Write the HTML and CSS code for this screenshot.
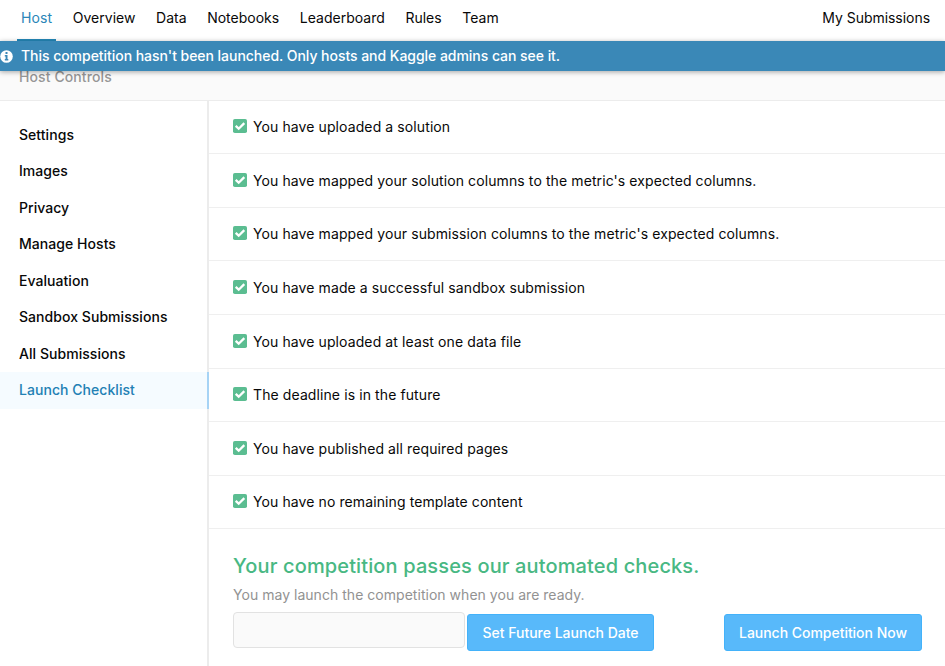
FILE: index.html
```html
<!DOCTYPE html>
<html lang="en">
<head>
<meta charset="utf-8">
<title>Launch Checklist</title>
<link rel="stylesheet" href="styles.css">
</head>
<body>
<svg class="sprite" aria-hidden="true">
  <symbol id="check" viewBox="0 0 14 14">
    <rect width="14" height="14" rx="1.8" fill="#5bbd91"/>
    <path d="M2.7 6.9 5.7 9.7 11.3 4.1" fill="none" stroke="#fff" stroke-width="2.3"/>
  </symbol>
</svg>
<nav class="tabs">
  <a class="tab active"><span>Host</span></a>
  <a class="tab"><span>Overview</span></a>
  <a class="tab"><span>Data</span></a>
  <a class="tab"><span>Notebooks</span></a>
  <a class="tab"><span>Leaderboard</span></a>
  <a class="tab"><span>Rules</span></a>
  <a class="tab"><span>Team</span></a>
  <a class="tab mine"><span>My Submissions</span></a>
</nav>
<div class="banner">
  <svg class="info" viewBox="0 0 13 13"><circle cx="6.5" cy="6.5" r="6.3" fill="#fff"/><path d="M5.5 2.1h2v1.8h-2zM4.8 5h2.7v4h.8v1.4H4.8V9h.8V6.4h-.8z" fill="#3a88b7"/></svg>
  <span>This competition hasn't been launched. Only hosts and Kaggle admins can see it.</span>
</div>
<header class="heading"><span>Host Controls</span></header>
<div class="layout">
  <aside class="sidebar">
    <a>Settings</a>
    <a>Images</a>
    <a>Privacy</a>
    <a>Manage Hosts</a>
    <a>Evaluation</a>
    <a>Sandbox Submissions</a>
    <a>All Submissions</a>
    <a class="selected">Launch Checklist</a>
  </aside>
  <main>
    <ul class="checks">
      <li><svg><use href="#check"/></svg><span>You have uploaded a solution</span></li>
      <li><svg><use href="#check"/></svg><span>You have mapped your solution columns to the metric's expected columns.</span></li>
      <li><svg><use href="#check"/></svg><span>You have mapped your submission columns to the metric's expected columns.</span></li>
      <li><svg><use href="#check"/></svg><span>You have made a successful sandbox submission</span></li>
      <li><svg><use href="#check"/></svg><span>You have uploaded at least one data file</span></li>
      <li><svg><use href="#check"/></svg><span>The deadline is in the future</span></li>
      <li><svg><use href="#check"/></svg><span>You have published all required pages</span></li>
      <li><svg><use href="#check"/></svg><span>You have no remaining template content</span></li>
    </ul>
    <section class="launch">
      <h2>Your competition passes our automated checks.</h2>
      <p>You may launch the competition when you are ready.</p>
      <div class="actions">
        <input type="text" aria-label="Launch date">
        <button class="date">Set Future Launch Date</button>
        <button class="now">Launch Competition Now</button>
      </div>
    </section>
  </main>
</div>
</body>
</html>
```
FILE: styles.css
```css
* { box-sizing: border-box; }
body {
  margin: 0;
  height: 666px;
  overflow: hidden;
  background: #fff;
  color: #080808;
  font: 14px/20px Inter, "Liberation Sans", sans-serif;
  letter-spacing: .1px;
  white-space: nowrap;
}
.sprite { display: none; }
.tabs { display: flex; height: 41px; padding: 0 11px 0 17px; letter-spacing: .01px; }
.tab { padding: 7.5px 4px 0; margin-right: 12.6px; }
.tab.active { color: #2b86b8; border-bottom: 2px solid #2588b8; }
.tab.active span { letter-spacing: .1px; }
.tab.mine { margin-left: auto; margin-right: 0; letter-spacing: -.04px; }
.banner {
  position: relative;
  display: flex;
  align-items: center;
  height: 30px;
  background: #3a88b7;
  color: #fff;
  font-weight: 500;
  letter-spacing: -.04px;
  box-shadow: 0 1px 5px rgba(0, 0, 0, .35);
}
.info { width: 13px; height: 13px; margin-right: 8px; }
.heading {
  display: flow-root;
  height: 30px;
  padding: 0 19px;
  background: #fafafa;
  border-bottom: 1px solid #ececec;
  color: #969696;
  font-weight: 500;
  letter-spacing: .1px;
}
.heading span { display: block; margin-top: -4px; }
.layout { display: flex; height: 565px; }
.sidebar {
  width: 209px;
  padding-top: 16px;
  border-right: 2px solid #ececec;
  font-weight: 500;
  letter-spacing: .05px;
}
.sidebar a { display: block; height: 36.45px; padding-left: 19px; line-height: 36.45px; }
.sidebar .selected {
  margin-right: -2px;
  border-right: 2px solid #a6d3f5;
  background: #f5fbff;
  color: #2280b4;
}
main { flex: 1; }
.checks { margin: 0; padding: 0; list-style: none; }
.checks li {
  display: flex;
  align-items: center;
  height: 53.6px;
  padding-left: 23.5px;
  border-bottom: 1px solid #efefef;
}
.checks li:first-child { height: 53.3px; }
.checks svg { width: 14px; height: 14px; margin: 0 6.5px 1.6px 0; }
.checks span { padding-top: .4px; }
.launch { padding: 22.7px 23px 0 24px; }
h2 { margin: 0; color: #48b883; font-size: 20px; font-weight: 500; line-height: 28px; letter-spacing: .13px; }
p { margin: 5.3px 0 6.7px; color: #929292; letter-spacing: .03px; }
.actions { display: flex; }
input {
  width: 232px;
  height: 36px;
  padding: 0 8px;
  border: 1px solid #e2e2e2;
  border-radius: 4px;
  background: #fafafa;
}
button {
  height: 37.5px;
  margin-top: 1.6px;
  padding: 1px 0 0;
  border: 1px solid #43b2fa;
  border-radius: 3px;
  background: #58b9fa;
  color: #fff;
  font: inherit;
  font-weight: 500;
  letter-spacing: 0;
}
.date { width: 187px; margin-left: 2px; }
.now { width: 198px; margin-left: auto; letter-spacing: -.03px; }
```
